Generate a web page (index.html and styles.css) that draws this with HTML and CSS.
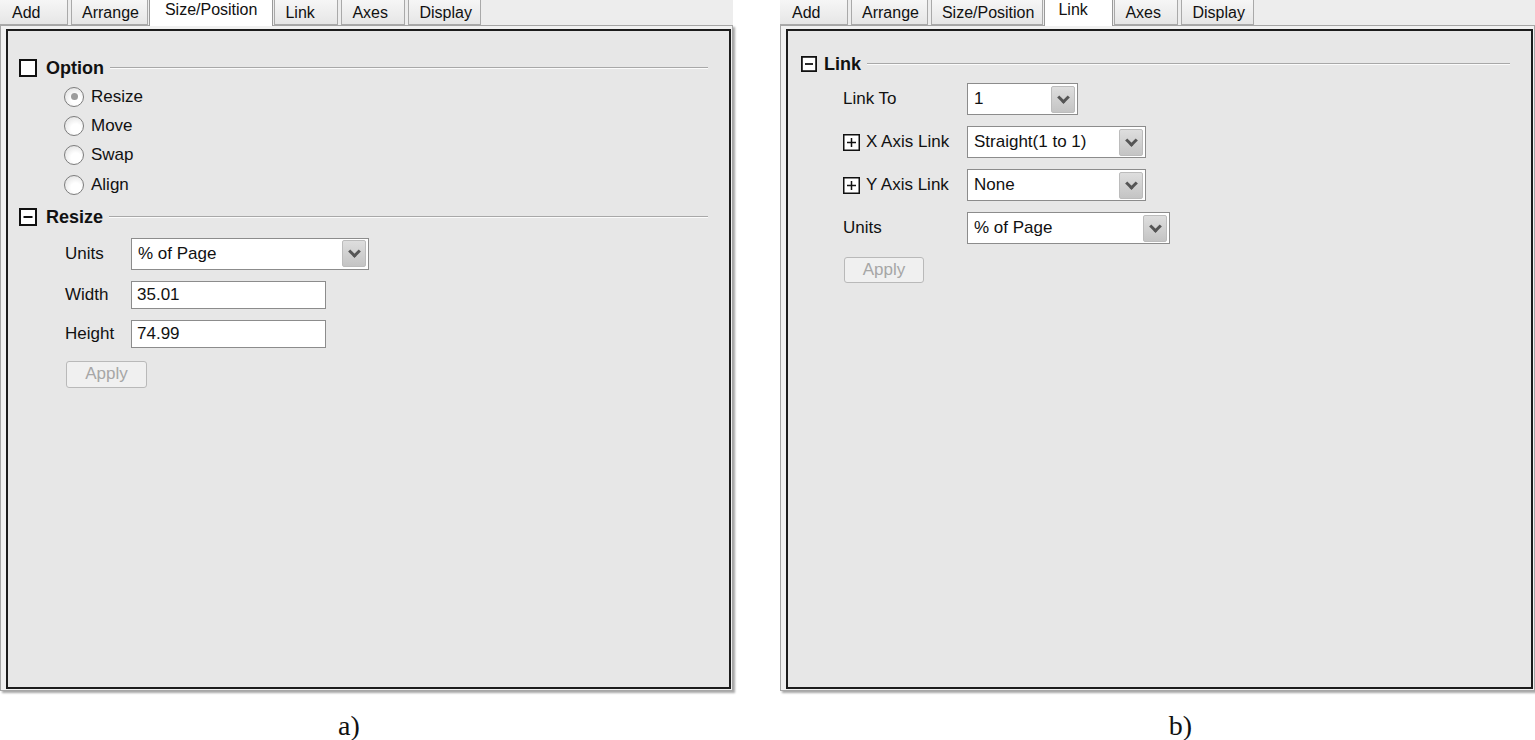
FILE: index.html
```html
<!DOCTYPE html>
<html lang="en">
<head>
  <meta charset="UTF-8">
  <title>Layer Management</title>
  <link rel="stylesheet" href="styles.css">
</head>
<body>
  <div class="panels">
    <!-- a) Size/Position tab -->
    <section class="panel panel-a">
      <nav class="tabs">
        <span class="tab">Add</span>
        <span class="tab">Arrange</span>
        <span class="tab active">Size/Position</span>
        <span class="tab">Link</span>
        <span class="tab">Axes</span>
        <span class="tab">Display</span>
      </nav>
      <div class="frame">
        <div class="page">
          <div class="group-head">
            <svg class="toggle" viewBox="0 0 18 18"><rect x="1" y="1" width="16" height="16" fill="#fff" stroke="#111" stroke-width="2"/></svg>
            <span class="group-title">Option</span>
            <span class="group-line"></span>
          </div>
          <ul class="radios">
            <li><span class="radio checked"></span>Resize</li>
            <li><span class="radio"></span>Move</li>
            <li><span class="radio"></span>Swap</li>
            <li><span class="radio"></span>Align</li>
          </ul>
          <div class="group-head head-resize">
            <svg class="toggle" viewBox="0 0 18 18"><rect x="1" y="1" width="16" height="16" fill="#fff" stroke="#111" stroke-width="2"/><path d="M4.5 9h9" stroke="#111" stroke-width="2"/></svg>
            <span class="group-title">Resize</span>
            <span class="group-line"></span>
          </div>
          <div class="row row-units">
            <label>Units</label>
            <div class="select sel-units"><span>% of Page</span><i class="drop"></i></div>
          </div>
          <div class="row row-field">
            <label>Width</label>
            <div class="input">35.01</div>
          </div>
          <div class="row row-field">
            <label>Height</label>
            <div class="input">74.99</div>
          </div>
          <button class="apply" disabled>Apply</button>
        </div>
      </div>
      <p class="caption">a)</p>
    </section>

    <!-- b) Link tab -->
    <section class="panel panel-b">
      <nav class="tabs">
        <span class="tab">Add</span>
        <span class="tab">Arrange</span>
        <span class="tab">Size/Position</span>
        <span class="tab active">Link</span>
        <span class="tab">Axes</span>
        <span class="tab">Display</span>
      </nav>
      <div class="frame">
        <div class="page">
          <div class="group-head">
            <svg class="toggle" viewBox="0 0 18 18"><rect x="1" y="1" width="16" height="16" fill="#fff" stroke="#111" stroke-width="2"/><path d="M4.5 9h9" stroke="#111" stroke-width="2"/></svg>
            <span class="group-title">Link</span>
            <span class="group-line"></span>
          </div>
          <div class="row">
            <label>Link To</label>
            <div class="select sel-short"><span>1</span><i class="drop"></i></div>
          </div>
          <div class="row">
            <label><svg class="plus" viewBox="0 0 17 17"><rect x="0.75" y="0.75" width="15.5" height="15.5" fill="#fff" stroke="#111" stroke-width="1.5"/><path d="M4 8.5h9M8.5 4v9" stroke="#111" stroke-width="1.5"/></svg>X Axis Link</label>
            <div class="select sel-mid"><span>Straight(1 to 1)</span><i class="drop"></i></div>
          </div>
          <div class="row">
            <label><svg class="plus" viewBox="0 0 17 17"><rect x="0.75" y="0.75" width="15.5" height="15.5" fill="#fff" stroke="#111" stroke-width="1.5"/><path d="M4 8.5h9M8.5 4v9" stroke="#111" stroke-width="1.5"/></svg>Y Axis Link</label>
            <div class="select sel-mid"><span>None</span><i class="drop"></i></div>
          </div>
          <div class="row">
            <label>Units</label>
            <div class="select sel-wide"><span>% of Page</span><i class="drop"></i></div>
          </div>
          <button class="apply" disabled>Apply</button>
        </div>
      </div>
      <p class="caption">b)</p>
    </section>
  </div>
</body>
</html>
```

FILE: styles.css
```css
/* Whole page */
body {
  margin: 0;
  background: #fff;
  font-family: "Liberation Sans", Arial, sans-serif;
  font-size: 17px;
  color: #111;
}

.panels {
  display: flex;
  gap: 47px;
}

.panel-a {
  width: 733px;
}

.panel-b {
  width: 755px;
}

/* Tab strip */
.tabs {
  display: flex;
  gap: 3px;
  height: 25px;
  background: #ededed;
  position: relative;
  z-index: 1;
}

.tab {
  box-sizing: border-box;
  min-width: 64px;
  height: 25px;
  padding: 1px 8px 0 10px;
  line-height: 23px;
  font-size: 16px;
  background: linear-gradient(#f6f6f6, #e6e6e6);
  border: 1px solid #a9a9a9;
  border-top: none;
  color: #111;
}

.tab:first-child {
  min-width: 68px;
  padding-left: 12px;
  border-left: none;
}

.tab.active {
  height: 26px;
  padding-top: 0;
  line-height: 20px;
  background: #fff;
  border-color: #9a9a9a;
  border-bottom: none;
  margin: 0 -2px 0 -2px;
  padding-left: 15px;
  padding-right: 15px;
  min-width: 69px;
}

.panel-b .tab.active {
  padding-left: 13px;
}

/* Frame around the page */
.frame {
  height: 666px;
  box-sizing: border-box;
  background: #f1f1f1;
  border: 1px solid #a6a6a6;
  padding: 3px 1px 1px 5px;
  box-shadow: 2px 2px 2px #a8a8a8;
}

.page {
  height: 660px;
  box-sizing: border-box;
  background: #e7e7e7;
  border: 2px solid #1c1c1c;
  padding: 28px 21px 0 11px;
  display: flex;
  flex-direction: column;
  align-items: flex-start;
}

.panel-b .page {
  padding-top: 24px;
}

/* Group headers with a rule */
.group-head {
  align-self: stretch;
  display: flex;
  align-items: center;
  height: 18px;
}

.toggle {
  width: 18px;
  height: 18px;
  flex: none;
}

.panel-b .toggle {
  width: 16px;
  height: 16px;
  margin-left: 2px;
}

.group-title {
  margin-left: 9px;
  font-weight: bold;
  font-size: 18px;
}

.panel-b .group-title {
  margin-left: 7px;
}

.group-line {
  flex: 1;
  margin-left: 6px;
  height: 1px;
  background: #a8a8a8;
  border-bottom: 1px solid #fbfbfb;
}

.head-resize {
  margin-top: 9px;
}

/* Radio list */
.radios {
  list-style: none;
  margin: 5px 0 0 45px;
  padding: 0;
}

.radios li {
  display: flex;
  align-items: center;
  height: 29.3px;
}

.radio {
  box-sizing: border-box;
  width: 20px;
  height: 20px;
  margin-right: 7px;
  border: 1px solid #7d7d7d;
  border-radius: 50%;
  background: radial-gradient(circle at 60% 65%, #fff 30%, #d9d9d9 100%);
  display: flex;
  align-items: center;
  justify-content: center;
}

.radio.checked::after {
  content: "";
  width: 7px;
  height: 7px;
  border-radius: 50%;
  background: #9c9c9c;
}

/* Label + control rows */
.row {
  display: flex;
  align-items: center;
  margin: 10px 0 0 44px;
}

.row label {
  width: 124px;
  display: flex;
  align-items: center;
}

.panel-a .row {
  margin-left: 46px;
}

.panel-a .row label {
  width: 66px;
}

.row-units {
  margin-top: 11.5px;
}

.row-field {
  margin-top: 11px;
}

.plus {
  width: 17px;
  height: 17px;
  margin-right: 6px;
}

.select,
.input {
  box-sizing: border-box;
  background: #fff;
  border: 1px solid #8c8c8c;
  display: flex;
  align-items: center;
  padding-left: 6px;
}

.select {
  height: 32px;
  padding-right: 2px;
  justify-content: space-between;
}

.input {
  width: 195px;
  height: 28px;
  padding-left: 5px;
}

.sel-units { width: 238px; }
.sel-short { width: 111px; }
.sel-mid   { width: 179px; }
.sel-wide  { width: 203px; }

.panel-b .row + .row {
  margin-top: 11px;
}

.drop {
  box-sizing: border-box;
  width: 24px;
  height: 27px;
  border: 1px solid #bcbcbc;
  border-radius: 2px;
  background: linear-gradient(#dedede, #c4c4c4);
  display: flex;
  align-items: center;
  justify-content: center;
}

.drop::after {
  content: "";
  width: 6px;
  height: 6px;
  border-right: 3px solid #555;
  border-bottom: 3px solid #555;
  transform: translateY(-2px) rotate(45deg);
}

.apply {
  margin: 13px 0 0 47px;
  width: 81px;
  height: 27px;
  padding: 0;
  font: inherit;
  font-size: 17px;
  color: #a6a6a6;
  background: #f0f0f0;
  border: 1px solid #b9b9b9;
  border-radius: 3px;
}

.panel-b .apply {
  margin-left: 45px;
  width: 80px;
  height: 26px;
}

/* Figure captions */
.caption {
  margin: 19px 0 0;
  font-family: "Liberation Serif", "Times New Roman", serif;
  font-size: 28px;
  text-align: center;
}

.panel-a .caption {
  padding-right: 35px;
}

.panel-b .caption {
  padding-left: 46px;
}
```
